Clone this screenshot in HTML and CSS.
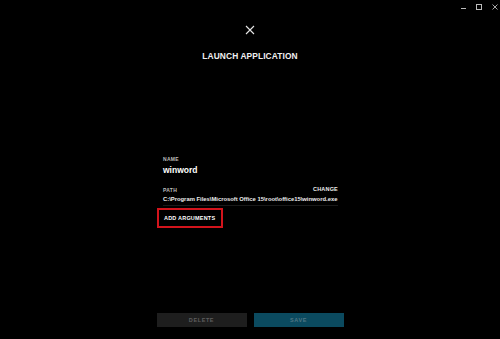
FILE: index.html
```html
<!DOCTYPE html>
<html>
<head>
<meta charset="utf-8">
<link rel="stylesheet" href="styles.css">
</head>
<body>
<div class="page">
  <div class="titlebar">
    <span class="wc wc-min"></span>
    <span class="wc wc-max"></span>
    <svg class="wc-close" width="6" height="6" viewBox="0 0 6 6"><path d="M0.5 0.5L5.5 5.5M5.5 0.5L0.5 5.5" stroke="#bbb" stroke-width="0.9"/></svg>
  </div>
  <div class="head">
    <svg class="close" width="10" height="10" viewBox="0 0 10 10"><path d="M1 1L9 9M9 1L1 9" stroke="#e6e6e6" stroke-width="1.1"/></svg>
    <h1 class="title">LAUNCH APPLICATION</h1>
  </div>
  <div class="form">
    <div class="label">NAME</div>
    <div class="name">winword</div>
    <div class="row">
      <div class="label">PATH</div>
      <div class="change">CHANGE</div>
    </div>
    <div class="path">C:\Program Files\Microsoft Office 15\root\office15\winword.exe</div>
    <div class="args">ADD ARGUMENTS</div>
  </div>
  <div class="footer">
    <div class="btn btn-delete">DELETE</div>
    <div class="btn btn-save">SAVE</div>
  </div>
</div>
</body>
</html>
```
FILE: styles.css
```css
html, body {
  margin: 0;
  padding: 0;
  background: #000;
}
body {
  font-family: "Liberation Sans", Arial, sans-serif;
  color: #fff;
}
.page {
  width: 500px;
  height: 339px;
  display: flex;
  flex-direction: column;
  align-items: center;
}
.titlebar {
  align-self: stretch;
  height: 10px;
  display: flex;
  justify-content: flex-end;
  align-items: center;
  gap: 10px;
  padding: 2px 2px 0 0;
}
.wc {
  display: block;
}
.wc-min {
  width: 5px;
  height: 1px;
  background: #bbb;
  margin-top: 3px;
}
.wc-max {
  width: 4px;
  height: 4px;
  border: 1px solid #bbb;
}
.wc-close {
  display: block;
}
.head {
  display: flex;
  flex-direction: column;
  align-items: center;
  margin-top: 13px;
}
.close {
  display: block;
}
.title {
  margin: 16px 0 0 0;
  font-size: 8.4px;
  font-weight: bold;
  letter-spacing: 0.1px;
  color: #f0f0f0;
  line-height: 10px;
}
.form {
  width: 175px;
  margin-top: 95px;
  margin-left: 1px;
  display: flex;
  flex-direction: column;
}
.label {
  font-size: 5px;
  font-weight: bold;
  color: #bdbdbd;
  letter-spacing: 0.3px;
  line-height: 6px;
}
.name {
  font-size: 8.5px;
  font-weight: bold;
  color: #fff;
  line-height: 10px;
  margin-top: 3px;
}
.row {
  display: flex;
  justify-content: space-between;
  align-items: flex-end;
  margin-top: 11px;
}
.change {
  font-size: 5.5px;
  font-weight: bold;
  color: #eee;
  letter-spacing: 0.2px;
  line-height: 7px;
}
.path {
  font-size: 5.85px;
  font-weight: bold;
  color: #eee;
  line-height: 7px;
  margin-top: 3px;
  padding-bottom: 2px;
  border-bottom: 1px solid #1a1a1a;
  white-space: nowrap;
}
.args {
  align-self: flex-start;
  margin-left: -6px;
  margin-top: 2px;
  padding: 5px 6px 4px 5px;
  border: 2px solid #d3141c;
  font-size: 5.5px;
  font-weight: bold;
  color: #fff;
  letter-spacing: 0.2px;
  line-height: 7px;
}
.footer {
  margin-top: auto;
  margin-bottom: 12px;
  display: flex;
  gap: 7px;
}
.btn {
  width: 90px;
  height: 14px;
  display: flex;
  align-items: center;
  justify-content: center;
  font-size: 5.5px;
  font-weight: bold;
  letter-spacing: 0.6px;
}
.btn-delete {
  background: #1e1e1e;
  color: #5e5e5e;
}
.btn-save {
  background: #0b4a5f;
  color: #4f7684;
}
```
